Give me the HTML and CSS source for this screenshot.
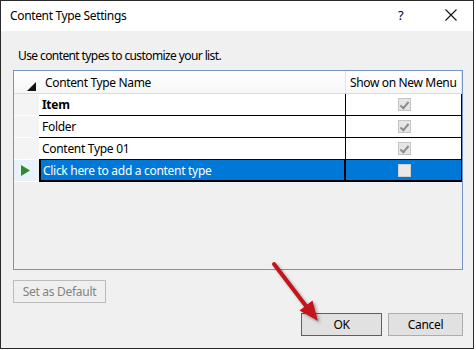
FILE: index.html
```html
<!DOCTYPE html>
<html>
<head>
<meta charset="utf-8">
<link rel="stylesheet" href="styles.css">
</head>
<body>
<div class="window">
  <div class="titlebar">
    <span class="title">Content Type Settings</span>
    <span class="help">?</span>
    <span class="close">
      <svg width="12" height="12" viewBox="0 0 12 12"><path d="M0.5 0.5 L11.5 11.5 M11.5 0.5 L0.5 11.5" stroke="#111" stroke-width="1.1" fill="none"/></svg>
    </span>
  </div>
  <div class="content">
    <p class="intro">Use content types to customize your list.</p>
    <div class="grid">
      <div class="row head">
        <div class="rh"><svg width="11" height="11" viewBox="0 0 11 11"><path d="M10 1 L10 10 L1 10 Z" fill="#111"/></svg></div>
        <div class="hc name-h">Content Type Name</div>
        <div class="hc show-h">Show on New Menu</div>
      </div>
      <div class="row">
        <div class="rh"></div>
        <div class="cell name bold">Item</div>
        <div class="cell show"><span class="cb checked"></span></div>
      </div>
      <div class="row">
        <div class="rh"></div>
        <div class="cell name">Folder</div>
        <div class="cell show"><span class="cb checked"></span></div>
      </div>
      <div class="row">
        <div class="rh"></div>
        <div class="cell name">Content Type 01</div>
        <div class="cell show"><span class="cb checked"></span></div>
      </div>
      <div class="row sel">
        <div class="rh"><svg width="9" height="11" viewBox="0 0 9 11"><path d="M0 0 L9 5.5 L0 11 Z" fill="#2f8a2f"/></svg></div>
        <div class="cell name">Click here to add a content type</div>
        <div class="cell show"><span class="cb"></span></div>
      </div>
    </div>
    <div class="left-actions">
      <button class="btn disabled" disabled>Set as Default</button>
    </div>
    <div class="footer">
      <button class="btn ok">OK</button>
      <button class="btn cancel">Cancel</button>
    </div>
  </div>
  <svg class="arrow" width="476" height="350" viewBox="0 0 476 350">
    <defs>
      <filter id="sh" x="-20%" y="-20%" width="140%" height="140%">
        <feDropShadow dx="2" dy="2" stdDeviation="1.5" flood-color="#000" flood-opacity="0.35"/>
      </filter>
    </defs>
    <g filter="url(#sh)">
      <line x1="274" y1="264" x2="306" y2="306" stroke="#c3141b" stroke-width="4" stroke-linecap="round"/>
      <path d="M318 321 L299.5 310.5 L312.5 300.5 Z" fill="#c3141b"/>
    </g>
  </svg>
</div>
</body>
</html>
```
FILE: styles.css
```css
* { box-sizing: border-box; }
html, body { margin: 0; padding: 0; background: #ffffff; }
body {
  font-family: "Noto Sans", "Open Sans", sans-serif;
  font-size: 12px;
  color: #000;
}
.window {
  position: relative;
  width: 474px;
  height: 349px;
  border: 1px solid #2b2b2b;
  display: flex;
  flex-direction: column;
  background: #f0f0f0;
}
.titlebar {
  height: 30px;
  background: #fff;
  display: flex;
  align-items: center;
  padding-left: 9px;
}
.title {
  flex: 1;
  font-size: 12px;
  letter-spacing: -0.35px;
  margin-top: -2px;
}
.help {
  width: 14px;
  font-size: 13px;
  margin-right: 33px;
  margin-top: -2px;
}
.close {
  width: 12px;
  height: 12px;
  margin-right: 16px;
  margin-top: -2px;
  display: flex;
}
.content {
  flex: 1;
  display: flex;
  flex-direction: column;
  padding: 0 10px 0 12px;
}
.intro {
  margin: 16px 0 0 5px;
  line-height: 17px;
  height: 17px;
  font-size: 12px;
  letter-spacing: -0.6px;
}
.grid {
  margin-top: 6px;
  width: 450px;
  height: 200px;
  border: 1px solid #7394c4;
  background: #f0f0f0;
  display: flex;
  flex-direction: column;
}
.row {
  display: grid;
  grid-template-columns: 25px 307px 116px;
  height: 22px;
}
.row.head {
  height: 23px;
  background: linear-gradient(#ffffff, #f6f6f6);
  border-bottom: 1px solid #dcdcdc;
}
.rh {
  display: flex;
  align-items: center;
  justify-content: center;
  background: #f4f4f4;
  border-bottom: 1px solid #ffffff;
}
.head .rh {
  background: transparent;
  border-bottom: none;
  justify-content: flex-end;
  align-items: flex-end;
  padding: 0 2px 1px 0;
}
.hc {
  display: flex;
  align-items: center;
  letter-spacing: -0.35px;
}
.name-h {
  padding-left: 6px;
  border-right: 1px solid #e3e3e3;
}
.show-h {
  padding-left: 4px;
  border-right: 1px solid #dfe6ee;
}
.cell {
  display: flex;
  align-items: center;
  background: #fff;
  border-bottom: 1px solid #000;
  letter-spacing: -0.3px;
}
.cell.name {
  padding-left: 3px;
  border-right: 1px solid #000;
}
.cell.show {
  justify-content: center;
  border-right: 1px solid #000;
  padding-left: 2px;
}
.bold { font-weight: 700; }
.sel .rh {
  background: #eaf2f9;
  justify-content: flex-start;
  padding-left: 7px;
}
.sel .cell {
  background: #0078d7;
  color: #fff;
  border-bottom: 2px solid #000;
}
.sel .cell.name {
  border-left: 2px solid #000;
  border-right: 2px solid #000;
  padding-left: 2px;
}
.cb {
  width: 13px;
  height: 13px;
  border: 1px solid #c4c4c4;
  background: #e6e6e6;
  position: relative;
}
.cb.checked::after {
  content: "";
  position: absolute;
  left: 3px;
  top: 1px;
  width: 3px;
  height: 7px;
  border-right: 2px solid #8c8c8c;
  border-bottom: 2px solid #8c8c8c;
  transform: rotate(40deg);
}
.sel .cb {
  background: #e9e9e9;
  border-color: #d0d0d0;
}
.left-actions {
  margin-top: 10px;
  display: flex;
}
.btn {
  font-family: "Noto Sans", "Open Sans", sans-serif;
  font-size: 12px;
  letter-spacing: -0.3px;
  height: 23px;
  padding: 0;
  margin: 0;
  background: #e1e1e1;
  border: 1px solid #adadad;
  color: #000;
}
.btn.disabled {
  width: 93px;
  background: #efefef;
  border-color: #bcbcbc;
  color: #838383;
}
.footer {
  margin-top: 10px;
  display: flex;
  justify-content: flex-end;
  gap: 6px;
}
.btn.ok {
  width: 81px;
  border-color: #0078d7;
}
.btn.cancel {
  width: 75px;
}
.arrow {
  position: absolute;
  left: -1px;
  top: -1px;
  pointer-events: none;
}
```
